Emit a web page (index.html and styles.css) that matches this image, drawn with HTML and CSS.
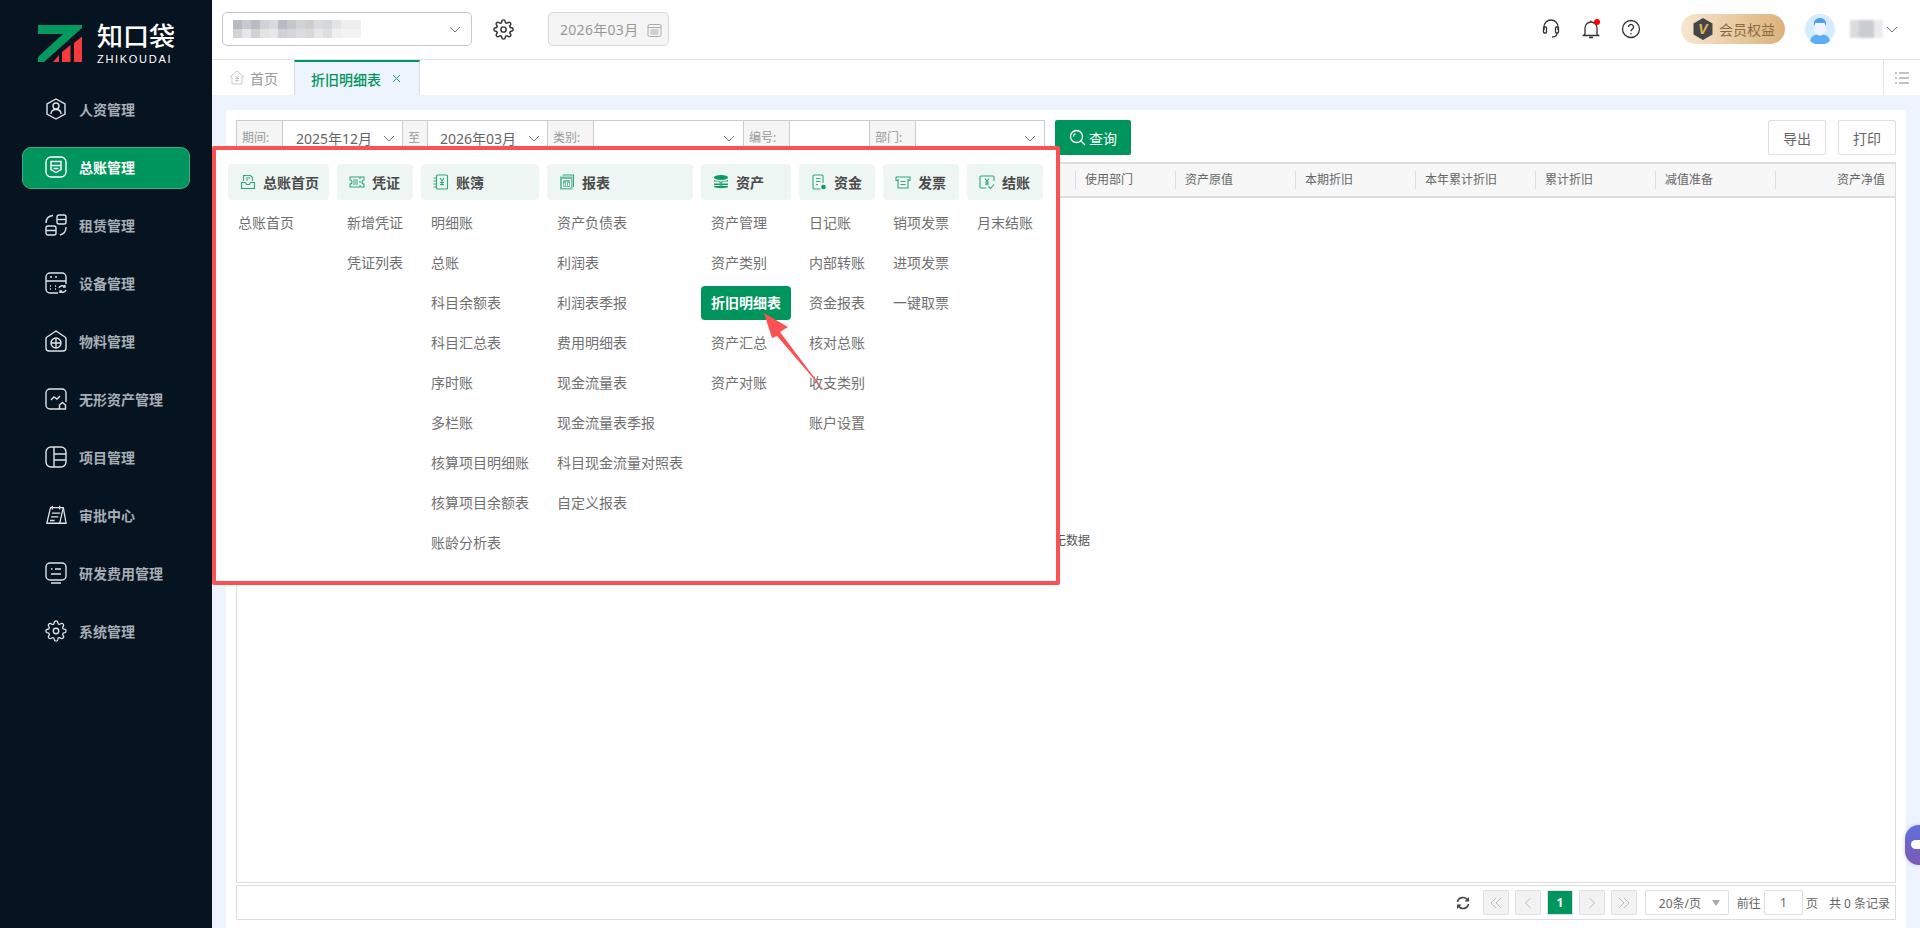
FILE: index.html
```html
<!DOCTYPE html>
<html lang="zh-CN">
<head>
  <meta charset="utf-8">
  <title>折旧明细表</title>
  <link rel="stylesheet" href="styles.css">
</head>
<body>
  <svg class="defs" width="0" height="0">
    <symbol id="gear" viewBox="0 0 24 24"><circle cx="12" cy="12" r="3"/><path d="M19.4 15a1.65 1.65 0 0 0 .33 1.82l.06.06a2 2 0 0 1 0 2.83 2 2 0 0 1-2.83 0l-.06-.06a1.65 1.65 0 0 0-1.82-.33 1.65 1.65 0 0 0-1 1.51V21a2 2 0 0 1-2 2 2 2 0 0 1-2-2v-.09A1.65 1.65 0 0 0 9 19.4a1.65 1.65 0 0 0-1.82.33l-.06.06a2 2 0 0 1-2.83 0 2 2 0 0 1 0-2.83l.06-.06a1.65 1.65 0 0 0 .33-1.82 1.65 1.65 0 0 0-1.51-1H3a2 2 0 0 1-2-2 2 2 0 0 1 2-2h.09A1.65 1.65 0 0 0 4.6 9a1.65 1.65 0 0 0-.33-1.82l-.06-.06a2 2 0 0 1 0-2.83 2 2 0 0 1 2.83 0l.06.06a1.65 1.65 0 0 0 1.82.33H9a1.65 1.65 0 0 0 1-1.51V3a2 2 0 0 1 2-2 2 2 0 0 1 2 2v.09a1.65 1.65 0 0 0 1 1.51 1.65 1.65 0 0 0 1.82-.33l.06-.06a2 2 0 0 1 2.83 0 2 2 0 0 1 0 2.83l-.06.06a1.65 1.65 0 0 0-.33 1.82V9a1.65 1.65 0 0 0 1.51 1H21a2 2 0 0 1 2 2 2 2 0 0 1-2 2h-.09a1.65 1.65 0 0 0-1.51 1z"/></symbol>
    <symbol id="chev" viewBox="0 0 12 7"><path d="M1 1l5 5 5-5"/></symbol>
  </svg>

  <aside class="sidebar">
    <div class="logo">
      <svg class="logo-mark" width="44" height="37" viewBox="38 25 44 37">
        <polygon fill="#049a5f" points="38,25 82,25 82,28 44,62 38,62 38,57 63,34 38,34"/>
        <polygon fill="#f53b3b" points="53,62 59,62 59,55"/>
        <polygon fill="#f53b3b" points="62,62 70.5,62 70.5,45 62,52"/>
        <polygon fill="#f53b3b" points="74,62 82,62 82,36.5 74,43"/>
      </svg>
      <div class="logo-text">
        <div class="logo-cn">知口袋</div>
        <div class="logo-en">ZHIKOUDAI</div>
      </div>
    </div>
    <nav class="nav">
      <a class="nav-item">
        <svg class="nav-icon" viewBox="0 0 22 22"><path d="M11 1l9 5v10l-9 5-9-5V6z"/><circle cx="11" cy="8" r="3"/><path d="M6 16c0-3 2-4.5 5-4.5s5 1.5 5 4.5"/></svg>
        人资管理
      </a>
      <a class="nav-item active">
        <svg class="nav-icon" viewBox="0 0 22 22"><rect x="1" y="1" width="20" height="20" rx="5"/><path d="M6 5.5h10v8l-5 3-5-3zM6 9.5h10M8.5 12.5h5"/></svg>
        总账管理
      </a>
      <a class="nav-item">
        <svg class="nav-icon" viewBox="0 0 22 22"><rect x="12" y="1" width="9" height="9" rx="2"/><path d="M12 5.5h9"/><rect x="1" y="12" width="10" height="9" rx="2"/><path d="M1 16.5h10M1 9c0-4 2-7 7-7.5M21 13c0 4-2 7-6 8"/></svg>
        租赁管理
      </a>
      <a class="nav-item">
        <svg class="nav-icon" viewBox="0 0 22 22"><path d="M13 21H5a4 4 0 0 1-4-4V5a4 4 0 0 1 4-4h12a4 4 0 0 1 4 4v7"/><path d="M1 9h20M5 5h2M10 5h2M5 14h1M5 17h1M10 14h1M10 17h1"/><path d="M14 16a3.5 3.5 0 0 1 6-1M21 18a3.5 3.5 0 0 1-6 1M20 13v2h-2M15 21v-2h2"/></svg>
        设备管理
      </a>
      <a class="nav-item">
        <svg class="nav-icon" viewBox="0 0 22 22"><path d="M11 1l9 6c.7.5 1 1 1 2v9a3 3 0 0 1-3 3H4a3 3 0 0 1-3-3V9c0-1 .3-1.5 1-2z"/><circle cx="11" cy="13" r="5"/><path d="M6 13h10M11 8v10"/></svg>
        物料管理
      </a>
      <a class="nav-item">
        <svg class="nav-icon" viewBox="0 0 22 22"><path d="M14 21H5a4 4 0 0 1-4-4V5a4 4 0 0 1 4-4h12a4 4 0 0 1 4 4v9"/><path d="M6 12l3-3 3 2 3-3"/><path d="M14.5 17l3-2.5 3 2.5v4h-6z"/></svg>
        无形资产管理
      </a>
      <a class="nav-item">
        <svg class="nav-icon" viewBox="0 0 22 22"><rect x="1" y="1" width="20" height="20" rx="5"/><path d="M9 1v20M9 8h12M9 14h12"/></svg>
        项目管理
      </a>
      <a class="nav-item">
        <svg class="nav-icon" viewBox="0 0 24 22"><path d="M6 3h14l-4 17H2z" stroke-linejoin="round"/><path d="M8 1v4M16 1v4M7.5 9h9M6.5 13h8M5.5 17h5M20 3l3 17h-7"/></svg>
        审批中心
      </a>
      <a class="nav-item">
        <svg class="nav-icon" viewBox="0 0 22 22"><rect x="1" y="1" width="20" height="17" rx="4"/><path d="M6 7h1.5M10 7h6M6 12h10M6 21h10"/></svg>
        研发费用管理
      </a>
      <a class="nav-item">
        <svg class="nav-icon"><use href="#gear"/></svg>
        系统管理
      </a>
    </nav>
  </aside>

  <main class="main">
    <header class="topbar">
      <div class="company-select">
        <span class="blur-name"></span>
        <svg class="chev"><use href="#chev"/></svg>
      </div>
      <svg class="top-gear"><use href="#gear"/></svg>
      <div class="month-box">
        2026年03月
        <svg class="cal" width="15" height="14" viewBox="0 0 15 14"><rect x="1" y="1.5" width="13" height="12" rx="1.5"/><path d="M1 4.5h13M3.5 7h8M3.5 9h8M3.5 11h8"/></svg>
      </div>
      <div class="top-right">
        <svg class="top-icon" viewBox="0 0 20 20"><path d="M3 11V8a7 7 0 0 1 14 0v3"/><rect x="2.5" y="8" width="3" height="6" rx="1"/><rect x="14.5" y="8" width="3" height="6" rx="1"/><path d="M16 14c0 3-2 4-5 4"/></svg>
        <span class="bell">
          <svg class="top-icon" viewBox="0 0 20 20"><path d="M4 15V9a6 6 0 0 1 12 0v6l1.5 1.5h-15zM10 3V1.5M8 18.5h4"/></svg>
          <i class="bell-dot"></i>
        </span>
        <svg class="top-icon" viewBox="0 0 20 20"><circle cx="10" cy="10" r="8.5"/><path d="M7.5 8a2.5 2.5 0 1 1 3.8 2.1c-.9.6-1.3 1-1.3 2.2"/><circle class="dot" cx="10" cy="14.7" r=".8"/></svg>
        <div class="vip">
          <svg width="20" height="22" viewBox="0 0 20 22"><path fill="#45464a" d="M10 0l9.5 5.5v11L10 22 .5 16.5v-11z"/><text x="10" y="16" class="vip-v">V</text></svg>
          会员权益
        </div>
        <svg class="avatar" width="30" height="30" viewBox="0 0 30 30"><circle cx="15" cy="15" r="15" fill="#d4ecff"/><path fill="#5dadf6" d="M5 27c1-5 5-7 10-7s9 2 10 7a15 15 0 0 1-20 0z"/><path fill="#f1f5fb" d="M9.5 9h11v6c0 4-2.5 6.5-5.5 6.5S9.5 19 9.5 15z"/><path fill="#4f9fe9" d="M9 12c-1-6 3-8 6-8s7 2 6 8l-1.5-3h-9z"/></svg>
        <span class="blur-user"></span>
        <svg class="chev"><use href="#chev"/></svg>
      </div>
    </header>

    <div class="tabs">
      <a class="tab">
        <svg width="16" height="15" viewBox="0 0 16 15"><path d="M8 1L1 7h2v7h10V7h2z"/><path d="M6.5 6L8 8l1.5-2M6 8.5h4M6 10.5h4M8 8v4.5"/></svg>
        首页
      </a>
      <a class="tab tab-on">折旧明细表<svg class="tab-x" width="9" height="9" viewBox="0 0 9 9"><path d="M1 1l7 7M8 1L1 8"/></svg></a>
      <div class="tab-menu">
        <svg width="14" height="12" viewBox="0 0 14 12"><path d="M0 1h2M4 1h10M0 6h2M4 6h10M0 11h2M4 11h10"/></svg>
      </div>
    </div>

    <div class="content">
      <section class="panel">
        <div class="filters">
          <div class="filter-group">
            <span class="f-label">期间:</span>
            <span class="f-val f-period">2025年12月<svg class="chev"><use href="#chev"/></svg></span>
            <span class="f-label f-to">至</span>
            <span class="f-val f-period">2026年03月<svg class="chev"><use href="#chev"/></svg></span>
            <span class="f-label">类别:</span>
            <span class="f-val f-kind"><svg class="chev"><use href="#chev"/></svg></span>
            <span class="f-label">编号:</span>
            <span class="f-val f-no"></span>
            <span class="f-label">部门:</span>
            <span class="f-val f-dept"><svg class="chev"><use href="#chev"/></svg></span>
          </div>
          <button class="btn-query">
            <svg width="17" height="17" viewBox="0 0 17 17"><circle cx="7.5" cy="7.5" r="6"/><path d="M12 12l4 4M4.5 7.5a3 3 0 0 1 2-3"/></svg>
            查询
          </button>
          <button class="btn-plain btn-export">导出</button>
          <button class="btn-plain">打印</button>
        </div>

        <div class="table-head">
          <div class="th-fill"></div>
          <div class="th th-dept">使用部门</div>
          <div class="th">资产原值</div>
          <div class="th">本期折旧</div>
          <div class="th">本年累计折旧</div>
          <div class="th">累计折旧</div>
          <div class="th">减值准备</div>
          <div class="th th-right">资产净值</div>
        </div>
        <div class="table-body">暂无数据</div>

        <div class="pager">
          <svg class="pg-refresh" width="14" height="14" viewBox="0 0 14 14"><path d="M1.5 6a5.5 5.5 0 0 1 10-2M12.5 8a5.5 5.5 0 0 1-10 2"/><path class="pg-fill" d="M13 1v4.5H8.5zM1 13V8.5h4.5z"/></svg>
          <span class="pg-btn"><svg width="14" height="12" viewBox="0 0 14 12"><path d="M7 1L2 6l5 5M12 1L7 6l5 5"/></svg></span>
          <span class="pg-btn"><svg width="8" height="12" viewBox="0 0 8 12"><path d="M6.5 1l-5 5 5 5"/></svg></span>
          <span class="pg-btn pg-on">1</span>
          <span class="pg-btn"><svg width="8" height="12" viewBox="0 0 8 12"><path d="M1.5 1l5 5-5 5"/></svg></span>
          <span class="pg-btn"><svg width="14" height="12" viewBox="0 0 14 12"><path d="M2 1l5 5-5 5M7 1l5 5-5 5"/></svg></span>
          <span class="pg-size">20条/页<i class="pg-tri"></i></span>
          <span class="pg-text">前往</span>
          <span class="pg-input">1</span>
          <span class="pg-text">页</span>
          <span class="pg-text pg-total">共 0 条记录</span>
        </div>
      </section>
    </div>
  </main>

  <!-- annotated menu that sits over the page -->
  <div class="mega">
    <div class="mega-col col-home">
      <div class="mega-head">
        <svg class="mh-icon" viewBox="0 0 16 16"><path d="M3.5 7V1.5h7l2 2V7M1.5 8.5h4l1 2h3l1-2h4v6h-13zM6 4h4M6 6h2"/></svg>
        总账首页
      </div>
      <a class="mega-item">总账首页</a>
    </div>
    <div class="mega-col col-voucher">
      <div class="mega-head">
        <svg class="mh-icon" viewBox="0 0 16 16"><path d="M1 3h14v3a2 2 0 0 0 0 4v3H1v-3a2 2 0 0 0 0-4zM4 6h5M4 8h5M4 10h5M11 3v2M11 7v2M11 11v2"/></svg>
        凭证
      </div>
      <a class="mega-item">新增凭证</a>
      <a class="mega-item">凭证列表</a>
    </div>
    <div class="mega-col col-book">
      <div class="mega-head">
        <svg class="mh-icon" viewBox="0 0 16 16"><rect x="3.5" y="1" width="11" height="14" rx="1"/><path d="M.5 4h3M.5 7h3M.5 10h3M.5 13h3M7 4l2 3 2-3M9 7v4.5M7 8.5h4M7 10.5h4"/></svg>
        账簿
      </div>
      <a class="mega-item">明细账</a>
      <a class="mega-item">总账</a>
      <a class="mega-item">科目余额表</a>
      <a class="mega-item">科目汇总表</a>
      <a class="mega-item">序时账</a>
      <a class="mega-item">多栏账</a>
      <a class="mega-item">核算项目明细账</a>
      <a class="mega-item">核算项目余额表</a>
      <a class="mega-item">账龄分析表</a>
    </div>
    <div class="mega-col col-report">
      <div class="mega-head">
        <svg class="mh-icon" viewBox="0 0 16 16"><rect class="mh-back" x="1" y="2.5" width="12.5" height="13"/><path d="M3.5 1h11v12"/><path class="mh-white" d="M3.5 5.5h8M3.5 13.5h8M3.5 5.5v8M11.5 5.5v8M5.5 12V9.5M7.5 12V7.5M9.5 12V9"/></svg>
        报表
      </div>
      <a class="mega-item">资产负债表</a>
      <a class="mega-item">利润表</a>
      <a class="mega-item">利润表季报</a>
      <a class="mega-item">费用明细表</a>
      <a class="mega-item">现金流量表</a>
      <a class="mega-item">现金流量表季报</a>
      <a class="mega-item">科目现金流量对照表</a>
      <a class="mega-item">自定义报表</a>
    </div>
    <div class="mega-col col-asset">
      <div class="mega-head">
        <svg class="mh-icon" viewBox="0 0 16 16"><ellipse class="mh-solid" cx="8" cy="3.5" rx="7" ry="2.5"/><path class="mh-solid" d="M1 6c2 1.5 12 1.5 14 0v1.5H1zM1 9.5h14V11H1zM1 13c2 1.5 12 1.5 14 0v-1H1z"/><path d="M6 7l2 2.5L10 7M8 9.5V14M6 11h4"/></svg>
        资产
      </div>
      <a class="mega-item">资产管理</a>
      <a class="mega-item">资产类别</a>
      <a class="mega-item mega-on">折旧明细表</a>
      <a class="mega-item">资产汇总</a>
      <a class="mega-item">资产对账</a>
    </div>
    <div class="mega-col col-money">
      <div class="mega-head">
        <svg class="mh-icon" viewBox="0 0 16 16"><path d="M9.5 15H3a1 1 0 0 1-1-1V2a1 1 0 0 1 1-1h8a1 1 0 0 1 1 1v7M5 4.5h4.5M5 7.5h4.5M5 10.5h2"/><circle class="mh-solid" cx="12.5" cy="13" r="2.3"/></svg>
        资金
      </div>
      <a class="mega-item">日记账</a>
      <a class="mega-item">内部转账</a>
      <a class="mega-item">资金报表</a>
      <a class="mega-item">核对总账</a>
      <a class="mega-item">收支类别</a>
      <a class="mega-item">账户设置</a>
    </div>
    <div class="mega-col col-invoice">
      <div class="mega-head">
        <svg class="mh-icon" viewBox="0 0 16 16"><path d="M1 3h14v3.5h-2M1 3v3.5h2M3 5v9h10V5M5.5 7.5h5M5.5 10.5h5"/></svg>
        发票
      </div>
      <a class="mega-item">销项发票</a>
      <a class="mega-item">进项发票</a>
      <a class="mega-item">一键取票</a>
    </div>
    <div class="mega-col col-close">
      <div class="mega-head">
        <svg class="mh-icon" viewBox="0 0 16 16"><path d="M7 14H2a1 1 0 0 1-1-1V3a1 1 0 0 1 1-1h12a1 1 0 0 1 1 1v4M6 4.5L8 7l2-2.5M8 7v4.5M6 8h4M6 10h4M9.5 12.5l2 2 3.5-4"/></svg>
        结账
      </div>
      <a class="mega-item">月末结账</a>
    </div>
    <svg class="mega-arrow" width="70" height="86" viewBox="0 0 70 86"><polygon points="4,3 28,17 20,22 66,83 17,26 12,28"/></svg>
  </div>

  <div class="chat-tab"><i class="chat-bubble"></i></div>
</body>
</html>
```

FILE: styles.css
```css
* {
  box-sizing: border-box;
}
html, body {
  height: 100%;
}
body {
  margin: 0;
  display: flex;
  height: 928px;
  overflow: hidden;
  font-family: "Noto Sans", "Noto Sans CJK SC", sans-serif;
  font-size: 14px;
  color: #666;
  background: #fff;
}
.defs {
  position: absolute;
}
svg {
  flex: none;
  fill: none;
  stroke: currentColor;
}

/* sidebar */
.sidebar {
  width: 212px;
  flex: none;
  background: #061320;
}
.logo {
  height: 89px;
  padding: 25px 0 0 38px;
  display: flex;
  align-items: flex-start;
}
.logo-mark {
  stroke: none;
}
.logo-text {
  margin-left: 15px;
  color: #fff;
}
.logo-cn {
  font-size: 26px;
  line-height: 23px;
  font-weight: 500;
}
.logo-en {
  margin-top: 6px;
  font-size: 11px;
  line-height: 10px;
  letter-spacing: 1.7px;
  font-family: "Liberation Sans", sans-serif;
}
.nav {
  padding: 0 22px;
  display: flex;
  flex-direction: column;
  gap: 16px;
}
.nav-item {
  height: 42px;
  padding: 0 0 2px 22px;
  display: flex;
  align-items: center;
  gap: 12px;
  border-radius: 9px;
  border: 1px solid transparent;
  font-weight: 700;
  color: #a6aeb6;
}
.nav-item.active {
  background: #00955c;
  border-color: #43ad85;
  color: #fff;
}
.nav-icon {
  width: 22px;
  height: 22px;
  color: #e0e3e6;
  stroke-width: 1.4;
}
.active .nav-icon {
  color: #fff;
}

/* top bar */
.main {
  flex: 1;
  min-width: 0;
  display: flex;
  flex-direction: column;
}
.topbar {
  height: 60px;
  flex: none;
  display: flex;
  align-items: center;
  padding: 0 22px 1px 10px;
  border-bottom: 1px solid #e5e5e5;
}
.company-select {
  width: 250px;
  height: 34px;
  padding: 0 10px;
  display: flex;
  align-items: center;
  justify-content: space-between;
  border: 1px solid #c6c6c6;
  border-radius: 5px;
}
.chev {
  width: 12px;
  height: 7px;
  color: #777;
  stroke-width: 1;
}
.blur-name {
  width: 128px;
  height: 18px;
  filter: blur(.6px);
  background:
    linear-gradient(90deg, #b7bac2 0 9px, #c6c9ce 9px 18px, #b9bcc3 18px 27px, #d0d2d6 27px 36px, #d8dadd 36px 45px, #b8bac1 45px 54px, #c4c6cb 54px 63px, #d0d2d5 63px 72px, #cfcdcc 72px 81px, #d9dadd 81px 90px, #d5d7da 90px 99px, #e4e4e6 99px 108px, #eeeeef 108px) top / 100% 50% no-repeat,
    linear-gradient(90deg, #d2d4d8 0 9px, #e6e7e9 9px 18px, #d0d2d6 18px 27px, #e2e3e5 27px 36px, #e6e7e8 36px 45px, #cfd1d4 45px 54px, #d5d6d9 54px 63px, #dcdde0 63px 72px, #d9d9d9 72px 81px, #e6e7e8 81px 90px, #dcdee0 90px 99px, #eeeff0 99px 108px, #f3f3f4 108px) bottom / 100% 50% no-repeat;
}
.top-gear {
  width: 21px;
  height: 21px;
  margin-left: 21px;
  color: #333;
  stroke-width: 1.7;
}
.month-box {
  width: 121px;
  height: 34px;
  margin-left: 34px;
  padding: 0 6px 0 11px;
  display: flex;
  align-items: center;
  justify-content: space-between;
  background: #f5f5f5;
  border: 1px solid #d8d8d8;
  border-radius: 5px;
  letter-spacing: .3px;
  color: #999;
}
.cal {
  color: #aaa;
  margin-top: 2px;
}
.top-right {
  margin-left: auto;
  display: flex;
  align-items: center;
}
.top-icon {
  width: 20px;
  height: 20px;
  display: block;
  color: #333;
  stroke-width: 1.3;
}
.top-icon + .bell, .bell + .top-icon {
  margin-left: 20px;
}
.dot {
  fill: #333;
  stroke: none;
}
.bell {
  position: relative;
}
.bell-dot {
  position: absolute;
  right: 1px;
  top: 0;
  width: 6px;
  height: 6px;
  border-radius: 50%;
  background: #f00;
}
.vip {
  width: 104px;
  height: 30px;
  margin-left: 40px;
  padding-left: 12px;
  display: flex;
  align-items: center;
  gap: 6px;
  border-radius: 15px;
  background: linear-gradient(90deg, #f7e6d0, #dbb279);
  color: #8a6a42;
}
.vip svg {
  stroke: none;
}
.vip-v {
  fill: #e3b64f;
  font: italic 700 14px "Liberation Sans", sans-serif;
  text-anchor: middle;
}
.avatar {
  margin-left: 20px;
  stroke: none;
}
.blur-user {
  width: 33px;
  height: 18px;
  margin: 0 3px 0 15px;
  filter: blur(1px);
  background: linear-gradient(90deg, #dcdcde 0 9px, #c9ccd2 9px 24px, #ececee 24px);
}

/* tabs */
.tabs {
  height: 35px;
  flex: none;
  display: flex;
}
.tab {
  height: 35px;
  display: flex;
  align-items: center;
  color: #999;
}
.tab:first-child {
  width: 82px;
  padding-left: 17px;
  gap: 5px;
}
.tab:first-child svg {
  color: #c9ccd2;
}
.tab-on {
  width: 126px;
  padding-left: 16px;
  background: #eef4fd;
  border: 1px solid #d8dde3;
  border-width: 0 1px;
  border-top: 2px solid #00955c;
  color: #00955c;
  font-weight: 500;
}
.tab-x {
  margin-left: 11px;
  stroke-width: .9;
}
.tab-menu {
  margin-left: auto;
  width: 37px;
  display: flex;
  align-items: center;
  justify-content: center;
  border-left: 1px solid #e5e5e5;
  color: #888;
}

/* page content */
.content {
  flex: 1;
  min-height: 0;
  padding: 15px 14px 0;
  background: #eef4fd;
  display: flex;
}
.panel {
  flex: 1;
  min-width: 0;
  padding: 10px 10px 8px;
  background: #fff;
  display: flex;
  flex-direction: column;
}
.filters {
  height: 35px;
  flex: none;
  display: flex;
}
.filter-group {
  width: 809px;
  display: flex;
  border: 1px solid #ccc;
  border-bottom: none;
}
.f-label {
  width: 47px;
  flex: none;
  padding-left: 5px;
  background: #f5f5f5;
  border-right: 1px solid #ccc;
  border-left: 1px solid #ccc;
  font-size: 12px;
  line-height: 34px;
  color: #999;
}
.f-label:first-child {
  width: 46px;
  border-left: none;
}
.f-to {
  width: 26px;
}
.f-val {
  display: flex;
  align-items: center;
  justify-content: space-between;
  padding: 0 8px 0 12px;
}
.f-label:first-child + .f-val {
  padding-left: 13px;
}
.f-period {
  width: 119px;
  padding-right: 7px;
}
.f-kind {
  width: 149px;
  justify-content: flex-end;
}
.f-no {
  width: 79px;
}
.f-dept {
  flex: 1;
  justify-content: flex-end;
}
button {
  font: inherit;
}
.btn-query {
  width: 76px;
  margin-left: 10px;
  padding: 0;
  display: flex;
  align-items: center;
  justify-content: center;
  gap: 3px;
  background: #00955c;
  border: none;
  border-radius: 2px;
  color: #fff;
}
.btn-query svg {
  stroke-width: 1.3;
}
.btn-plain {
  width: 58px;
  margin-left: 12px;
  padding: 0;
  background: #fff;
  border: 1px solid #dcdfe6;
  border-radius: 2px;
  color: #666;
}
.btn-export {
  margin-left: auto;
}

/* table */
.table-head {
  height: 36px;
  flex: none;
  margin-top: 7px;
  display: flex;
  align-items: center;
  background: #f7f7f7;
  border: 1px solid #ddd;
  border-width: 2px 1px;
  font-size: 12px;
  color: #666;
}
.th-fill {
  flex: 1;
}
.th {
  width: 120px;
  height: 18px;
  padding-left: 9px;
  border-left: 1px solid #ddd;
  line-height: 18px;
}
.th-dept {
  width: 100px;
}
.th-right {
  padding: 0 10px 0 0;
  text-align: right;
}
.table-body {
  flex: 1;
  display: flex;
  align-items: center;
  justify-content: center;
  border: 1px solid #ddd;
  border-top: none;
  font-size: 12px;
  color: #555;
}
.pager {
  height: 35px;
  flex: none;
  margin-top: 2px;
  padding-right: 5px;
  display: flex;
  align-items: center;
  justify-content: flex-end;
  border: 1px solid #ddd;
  font-size: 12px;
  color: #666;
}
.pg-refresh {
  margin-right: 13px;
  color: #444;
  stroke-width: 1.6;
}
.pg-fill {
  fill: #444;
  stroke: none;
}
.pg-btn {
  width: 26px;
  height: 25px;
  margin-right: 6px;
  display: flex;
  align-items: center;
  justify-content: center;
  background: #f2f2f2;
  border: 1px solid #dcdfe6;
  border-radius: 2px;
  color: #bbb;
}
.pg-on {
  background: #00955c;
  border-color: #dcdfe6;
  border-radius: 0;
  color: #fff;
  font-weight: 700;
}
.pg-size {
  width: 84px;
  height: 25px;
  margin: 0 8px 0 2px;
  padding-left: 13px;
  display: flex;
  align-items: center;
  position: relative;
  border: 1px solid #dcdfe6;
  border-radius: 2px;
}
.pg-tri {
  position: absolute;
  right: 8px;
  top: 9px;
  border-style: solid;
  border-color: #aaa transparent transparent;
  border-width: 6px 4.5px 0;
}
.pg-input {
  width: 39px;
  height: 25px;
  margin: 0 3px;
  display: flex;
  align-items: center;
  justify-content: center;
  border: 1px solid #dcdfe6;
  border-radius: 2px;
}
.pg-total {
  margin-left: 11px;
}

/* red-framed menu */
.mega {
  position: absolute;
  left: 212px;
  top: 146px;
  width: 848px;
  height: 439px;
  padding: 14px 12px;
  display: flex;
  gap: 8px;
  background: #fff;
  border: 4px solid #fa5252;
  border-radius: 2px;
}
.mega-col {
  display: flex;
  flex-direction: column;
  gap: 6px;
}
.col-home { width: 101px; }
.col-voucher, .col-money, .col-invoice, .col-close { width: 76px; }
.col-book { width: 118px; }
.col-report { width: 146px; }
.col-asset { width: 90px; }
.mega-head {
  height: 36px;
  padding-left: 12px;
  display: flex;
  align-items: center;
  gap: 7px;
  background: #edf6f3;
  border-radius: 4px;
  font-weight: 700;
  color: #4a4a4a;
}
.mh-icon {
  width: 16px;
  height: 16px;
  color: #2fa87a;
  stroke-width: 1.1;
}
.mh-solid {
  fill: #0a9a62;
  stroke: none;
}
.mh-back {
  fill: #6cc0a0;
  stroke: none;
}
.mh-white {
  stroke: #fff;
}
.mega-item {
  height: 34px;
  padding-left: 10px;
  line-height: 34px;
  white-space: nowrap;
  color: #707070;
}
.mega-on {
  background: #00955c;
  border-radius: 4px;
  color: #fff;
  font-weight: 700;
}
.mega-arrow {
  position: absolute;
  left: 544px;
  top: 160px;
  stroke: none;
  fill: #fa5252;
}

.chat-tab {
  position: absolute;
  right: 0;
  top: 825px;
  width: 15px;
  height: 40px;
  border-radius: 14px 0 0 14px;
  background: linear-gradient(180deg, #5d72dc, #7b58b4);
  box-shadow: 0 0 4px rgba(90, 90, 200, .3);
}
.chat-bubble {
  position: absolute;
  left: 6px;
  top: 15px;
  width: 10px;
  height: 9px;
  background: #fff;
  border-radius: 5px 0 0 5px;
}
```
